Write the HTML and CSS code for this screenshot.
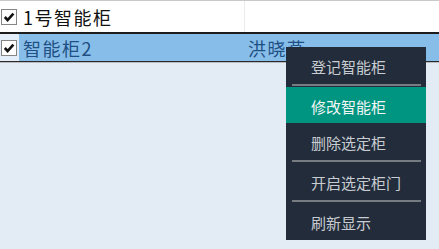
FILE: index.html
```html
<!DOCTYPE html>
<html lang="zh-CN">
  <head>
    <meta charset="UTF-8" />
    <title>智能柜列表</title>
    <link rel="stylesheet" href="styles.css">
  </head>
  <body>
    <div class="grid">
      <div class="row">
        <div class="check-cell">
          <span class="check"><svg viewBox="0 0 12 12" width="12" height="12"><path d="M1.8 6 L4.6 9 L10.4 2.6" fill="none" stroke="#111" stroke-width="2.6"/></svg></span>
        </div>
        <div class="cell name">1号智能柜</div>
        <div class="cell owner"></div>
      </div>
      <div class="row selected">
        <div class="check-cell">
          <span class="check"><svg viewBox="0 0 12 12" width="12" height="12"><path d="M1.8 6 L4.6 9 L10.4 2.6" fill="none" stroke="#111" stroke-width="2.6"/></svg></span>
        </div>
        <div class="cell name">智能柜2</div>
        <div class="cell owner">洪晓燕</div>
      </div>
    </div>

    <ul class="menu">
      <li class="menu-item">登记智能柜</li>
      <li class="menu-sep"></li>
      <li class="menu-item active">修改智能柜</li>
      <li class="menu-item">删除选定柜</li>
      <li class="menu-sep"></li>
      <li class="menu-item">开启选定柜门</li>
      <li class="menu-sep"></li>
      <li class="menu-item">刷新显示</li>
    </ul>
  </body>
</html>
```

FILE: styles.css
```css
* {
  margin: 0;
  padding: 0;
  box-sizing: border-box;
}
body {
  background-color: #e3ecf4;
  font-family: "Noto Sans CJK SC", "Noto Sans", sans-serif;
  height: 249px;
  overflow: hidden;
}
.grid {
  border-top: 1px solid #c9c9c9;
}
.row {
  display: flex;
  height: 31px;
  background-color: #fff;
}
.row.selected {
  height: 30px;
  background-color: #87bee9;
  border-top: 2px solid #1d1d1d;
  border-bottom: 1px solid #2a2a2a;
  box-shadow: 0 1px 0 #b9bcbf;
}
.check-cell {
  width: 19px;
  display: flex;
  align-items: center;
  padding-left: 1px;
}
.row.selected .check-cell {
  background-color: #e4eef8;
}
.check {
  width: 16px;
  height: 16px;
  border: 1px solid #858585;
  background: #fff;
  display: flex;
  align-items: center;
  justify-content: center;
}
.cell {
  display: flex;
  align-items: center;
  font-size: 18px;
  letter-spacing: 1.5px;
  color: #111;
}
.name {
  width: 226px;
  padding-left: 4px;
  border-right: 1px solid #ececec;
}
.owner {
  flex: 1;
  padding-left: 3px;
}
.row.selected .cell {
  color: #1f4f84;
  border-right-color: transparent;
}
.menu {
  list-style: none;
  position: absolute;
  left: 286px;
  top: 47px;
  width: 140px;
  background-color: #222c3b;
  padding-bottom: 1px;
}
.menu-item {
  height: 36px;
  display: flex;
  align-items: center;
  padding-left: 25px;
  padding-top: 2px;
  font-size: 15px;
  color: #c9ccd1;
}
.menu-item.active {
  background-color: #009580;
  color: #f4f6f6;
}
.menu-sep {
  height: 2px;
  margin: 1px 5px 1px 6px;
  background-color: #777b82;
}
```
